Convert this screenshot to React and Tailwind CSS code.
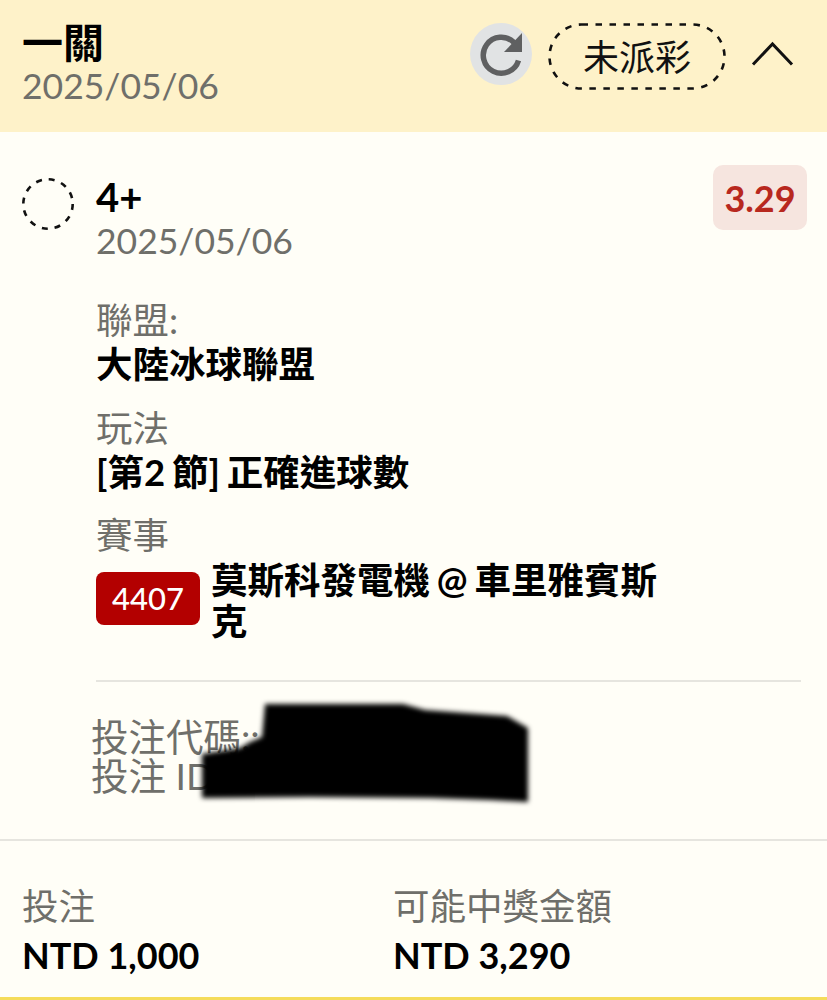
const font = "font-['Lato','Noto_Sans_CJK_TC',sans-serif]";

function Field({ label, children }) {
  return (
    <div className="mb-[19.5px]">
      <div className="text-[36.5px] leading-[43px] text-[#6f6f6a]">{label}</div>
      <div className="text-[36.5px] leading-[45px] font-bold text-black [word-spacing:-2px]">{children}</div>
    </div>
  );
}

function Reload() {
  return (
    <div className="w-[62px] h-[62px] rounded-full bg-[#e1e3e4] flex items-center justify-center">
      <svg width="46" height="46" viewBox="0 0 46 46" fill="none">
        <path d="M40.5 29.5A18 18 0 1 1 36 11.5" stroke="#5f6061" strokeWidth="5.5" />
        <path d="M44 2V21H26z" fill="#5f6061" />
      </svg>
    </div>
  );
}

export default function App() {
  return (
    <div className={font + " w-[827px] h-[1000px] overflow-hidden bg-[#fffef7] flex flex-col"}>
      {/* Header */}
      <header className="h-[132px] bg-[#fef2c9] flex justify-between pl-[22px] pr-[33px] pt-[21px] shrink-0">
        <div>
          <div className="text-[41px] leading-[44px] font-bold text-black">一關</div>
          <div className="text-[35.5px] leading-[42px] text-[#6f6f6a]">2025/05/06</div>
        </div>
        <div className="flex items-start pt-[2px]">
          <Reload />
          <div className="relative ml-[16px] w-[178px] h-[67px] flex items-center justify-center text-[36px] text-[#111]">
            <svg className="absolute inset-0" width="178" height="67" viewBox="0 0 178 67" fill="none">
              <rect x="1.5" y="1.5" width="175" height="64" rx="32" stroke="#111" strokeWidth="2.6" strokeDasharray="6.5 7.5" />
            </svg>
            未派彩
          </div>
          <svg className="ml-[25px] mt-[18px]" width="43" height="26" viewBox="0 0 43 26" fill="none">
            <path d="M2 23.5 21.5 3 41 23.5" stroke="#111" strokeWidth="3" />
          </svg>
        </div>
      </header>

      {/* Selection */}
      <section className="flex-1 relative">
        <div className="flex pl-[22px] pr-[20px] pt-[33px]">
          <svg className="mt-[13px] shrink-0" width="52" height="52" viewBox="0 0 52 52" fill="none">
            <circle cx="26" cy="26" r="24.7" stroke="#111" strokeWidth="2.6" strokeDasharray="6 6.93" />
          </svg>
          <div className="ml-[22px] mt-[10px] flex-1">
            <div className="text-[40px] leading-[44px] font-bold text-black">4+</div>
            <div className="text-[35.5px] leading-[44px] text-[#6f6f6a]">2025/05/06</div>
          </div>
          <div className="w-[94px] h-[65px] rounded-[10px] bg-[#f6e5df] flex items-center justify-center text-[36px] font-bold text-[#b8281e]">
            3.29
          </div>
        </div>

        <div className="ml-[96px] mr-[26px] mt-[36px]">
          <Field label="聯盟:">大陸冰球聯盟</Field>
          <Field label="玩法">[第2 節] 正確進球數</Field>
          <div className="text-[36.5px] leading-[43px] text-[#6f6f6a]">賽事</div>
          <div className="flex items-start mt-[3px]">
            <div className="w-[104px] h-[53px] mt-[12px] rounded-[8px] bg-[#b30000] text-white text-[31px] font-medium flex items-center justify-center shrink-0">
              4407
            </div>
            <div className="ml-[11px] w-[460px] text-[36.5px] leading-[41px] font-bold text-black [word-spacing:-2px]">
              莫斯科發電機 @ 車里雅賓斯克
            </div>
          </div>
          <div className="mt-[38px] h-[2px] bg-[#e6e5df]" />
        </div>

        <div className="ml-[91px] mt-[35px] text-[37.5px] leading-[39px] text-[#6f6f6a]">
          <div>投注代碼:: </div>
          <div>投注 ID: 2</div>
        </div>
        {/* redaction scribble */}
        <svg className="absolute left-[190px] top-[560px]" width="350" height="120" viewBox="0 0 350 120">
          <filter id="b">
            <feGaussianBlur stdDeviation="2.5" />
          </filter>
          <path
            d="M75 12 L213 12 L235 18 L317 24 L338 36 L338 110 L300 108 L240 106 L120 105 L12 106 L12 62 L50 56 L60 50 L72 45 Z"
            fill="#000"
            filter="url(#b)"
          />
        </svg>
      </section>

      {/* Totals */}
      <footer className="h-[161px] border-t-2 border-[#e6e5df] border-b-[3px] border-b-[#f5dc5a] grid grid-cols-[371px_1fr] pl-[22px] pt-[42px] shrink-0">
        <div>
          <div className="text-[36.5px] leading-[46px] text-[#6f6f6a]">投注</div>
          <div className="text-[36px] leading-[52px] font-bold text-black">NTD 1,000</div>
        </div>
        <div>
          <div className="text-[36.5px] leading-[46px] text-[#6f6f6a]">可能中獎金額</div>
          <div className="text-[36px] leading-[52px] font-bold text-black">NTD 3,290</div>
        </div>
      </footer>
    </div>
  );
}
